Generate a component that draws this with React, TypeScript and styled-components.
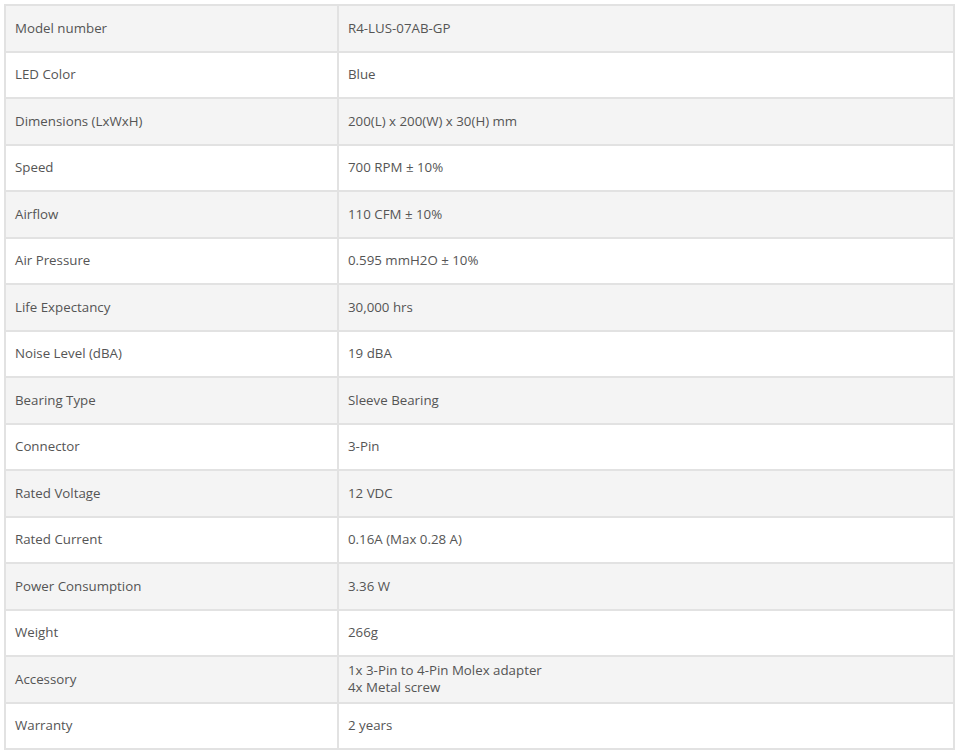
import { createGlobalStyle } from "styled-components";
import styled from "styled-components";

const GlobalStyle = createGlobalStyle`
  html, body {
    margin: 0;
    padding: 0;
    background: #fff;
  }
  body {
    font-family: "Open Sans", "Noto Sans", sans-serif;
  }
`;

type Spec = {
  label: string;
  value: string[];
};

const specs: Spec[] = [
  { label: "Model number", value: ["R4-LUS-07AB-GP"] },
  { label: "LED Color", value: ["Blue"] },
  { label: "Dimensions (LxWxH)", value: ["200(L) x 200(W) x 30(H) mm"] },
  { label: "Speed", value: ["700 RPM ± 10%"] },
  { label: "Airflow", value: ["110 CFM ± 10%"] },
  { label: "Air Pressure", value: ["0.595 mmH2O ± 10%"] },
  { label: "Life Expectancy", value: ["30,000 hrs"] },
  { label: "Noise Level (dBA)", value: ["19 dBA"] },
  { label: "Bearing Type", value: ["Sleeve Bearing"] },
  { label: "Connector", value: ["3-Pin"] },
  { label: "Rated Voltage", value: ["12 VDC"] },
  { label: "Rated Current", value: ["0.16A (Max 0.28 A)"] },
  { label: "Power Consumption", value: ["3.36 W"] },
  { label: "Weight", value: ["266g"] },
  { label: "Accessory", value: ["1x 3-Pin to 4-Pin Molex adapter", "4x Metal screw"] },
  { label: "Warranty", value: ["2 years"] },
];

const Page = styled.div`
  padding: 4px 5px 4px 4px;
`;

const SpecTable = styled.table`
  width: 951px;
  border-collapse: collapse;
  table-layout: fixed;
  border: 2px solid #e2e2e2;
  font-size: 13.3px;
  line-height: 17px;
  color: #555;
`;

const Row = styled.tr<{ $shaded: boolean }>`
  height: 46.5px;
  background: ${(p) => (p.$shaded ? "#f4f4f4" : "#fff")};
`;

const Cell = styled.td<{ $label?: boolean }>`
  width: ${(p) => (p.$label ? "313px" : "auto")};
  padding: 0 9px;
  border: 2px solid #e2e2e2;
  vertical-align: middle;
  text-align: left;
`;

const Line = styled.div`
  white-space: nowrap;
`;

export default function App() {
  return (
    <Page>
      <GlobalStyle />
      <SpecTable>
        <tbody>
          {specs.map((s, i) => (
            <Row key={s.label} $shaded={i % 2 === 0}>
              <Cell $label>{s.label}</Cell>
              <Cell>
                {s.value.map((v) => (
                  <Line key={v}>{v}</Line>
                ))}
              </Cell>
            </Row>
          ))}
        </tbody>
      </SpecTable>
    </Page>
  );
}
